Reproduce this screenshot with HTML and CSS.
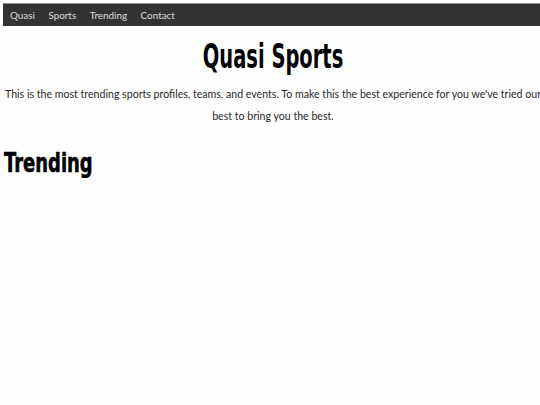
FILE: index.html
```html
<!DOCTYPE html>
<html>
<head>
<meta charset="utf-8">
<link rel="stylesheet" href="styles.css">
</head>
<body>
<div class="page">
  <nav class="topnav">
    <a href="#">Quasi</a>
    <a href="#">Sports</a>
    <a href="#">Trending</a>
    <a href="#">Contact</a>
  </nav>
  <h1 class="title"><span class="narrow">Quasi Sports</span></h1>
  <p class="intro">This is the most trending sports profiles, teams, and events. To make this the best experience for you we've tried our best to bring you the best.</p>
  <h2 class="section"><span class="squeeze">Trending</span></h2>
</div>
</body>
</html>
```

FILE: styles.css
```css
html, body {
  margin: 0;
  padding: 0;
  background: #fefefe;
  overflow: hidden;
}
.page {
  width: 540px;
  margin: 3px 0 0 3px;
  font-family: Lato, "Open Sans", sans-serif;
}
.topnav {
  display: flex;
  height: 23px;
  align-items: center;
  background: #333333;
  border-top: 1px solid #8a8a8a;
  box-sizing: border-box;
  padding-left: 7px;
  gap: 13.5px;
}
.topnav a {
  color: #dddddd;
  text-decoration: none;
  font-size: 9.9px;
}
.title {
  margin: 13px 0 0 0;
  text-align: center;
  font-family: "DejaVu Sans", sans-serif;
  font-weight: bold;
  font-size: 33px;
  line-height: 35px;
  color: #000;
}
.narrow {
  display: inline-block;
  transform: scaleX(0.59);
}
.intro {
  margin: 10px 0 0 0;
  text-align: center;
  font-size: 10.6px;
  line-height: 21.5px;
  color: #2a2a2a;
}
.section {
  margin: 21px 0 0 1px;
  font-family: "DejaVu Sans", sans-serif;
  font-weight: 900;
  font-size: 26px;
  line-height: 30px;
  color: #000;
}
.squeeze {
  display: inline-block;
  transform: scaleX(0.69);
  transform-origin: left center;
  -webkit-text-stroke: 0.6px #000;
}
```
